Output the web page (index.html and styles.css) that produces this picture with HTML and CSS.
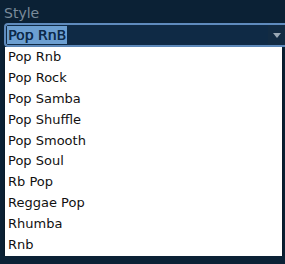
FILE: index.html
```html
<!DOCTYPE html>
<html lang="en">
<head>
  <meta charset="UTF-8" />
  <title>Style</title>
  <link rel="stylesheet" href="styles.css">
</head>
<body>
  <div class="panel">
    <div class="label">Style</div>
    <div class="select">
      <span class="value"><span class="hl">Pop RnB</span></span>
      <span class="arrow"></span>
    </div>
    <ul class="list">
      <li>Pop Rnb</li>
      <li>Pop Rock</li>
      <li>Pop Samba</li>
      <li>Pop Shuffle</li>
      <li>Pop Smooth</li>
      <li>Pop Soul</li>
      <li>Rb Pop</li>
      <li>Reggae Pop</li>
      <li>Rhumba</li>
      <li>Rnb</li>
    </ul>
  </div>
</body>
</html>
```

FILE: styles.css
```css
body {
  margin: 0;
  background: #0b2135;
  font-family: "DejaVu Sans", sans-serif;
  overflow: hidden;
}
.panel {
  padding: 3px 0 0 4px;
}
.label {
  color: #7a8b9b;
  font-size: 14px;
  height: 20px;
  line-height: 20px;
}
.select {
  display: flex;
  height: 20px;
  border: 2px solid #5f8bbd;
  border-right: none;
  border-radius: 4px 0 0 4px;
  background: #0f2a45;
}
.value {
  flex: 1;
  padding: 1px 0 0 1px;
  font-size: 14px;
  line-height: 18px;
}
.hl {
  display: inline-block;
  background: #6c9fd1;
  color: #0d2a4a;
  padding: 0 1px;
  text-shadow: 0.4px 0 0 #0d2a4a;
}
.arrow {
  width: 17px;
  background: #122b43;
  display: flex;
  align-items: center;
  justify-content: center;
}
.arrow::before {
  content: "";
  border-left: 4px solid transparent;
  border-right: 4px solid transparent;
  border-top: 5px solid #9aa8b5;
}
.list {
  list-style: none;
  margin: 0 3px 0 1px;
  padding: 0;
  background: #fff;
  box-shadow: 0 2px 3px rgba(0, 0, 0, 0.5);
}
.list li {
  height: 20.9px;
  line-height: 20.9px;
  padding-left: 3px;
  font-size: 13px;
  color: #111;
}
```
